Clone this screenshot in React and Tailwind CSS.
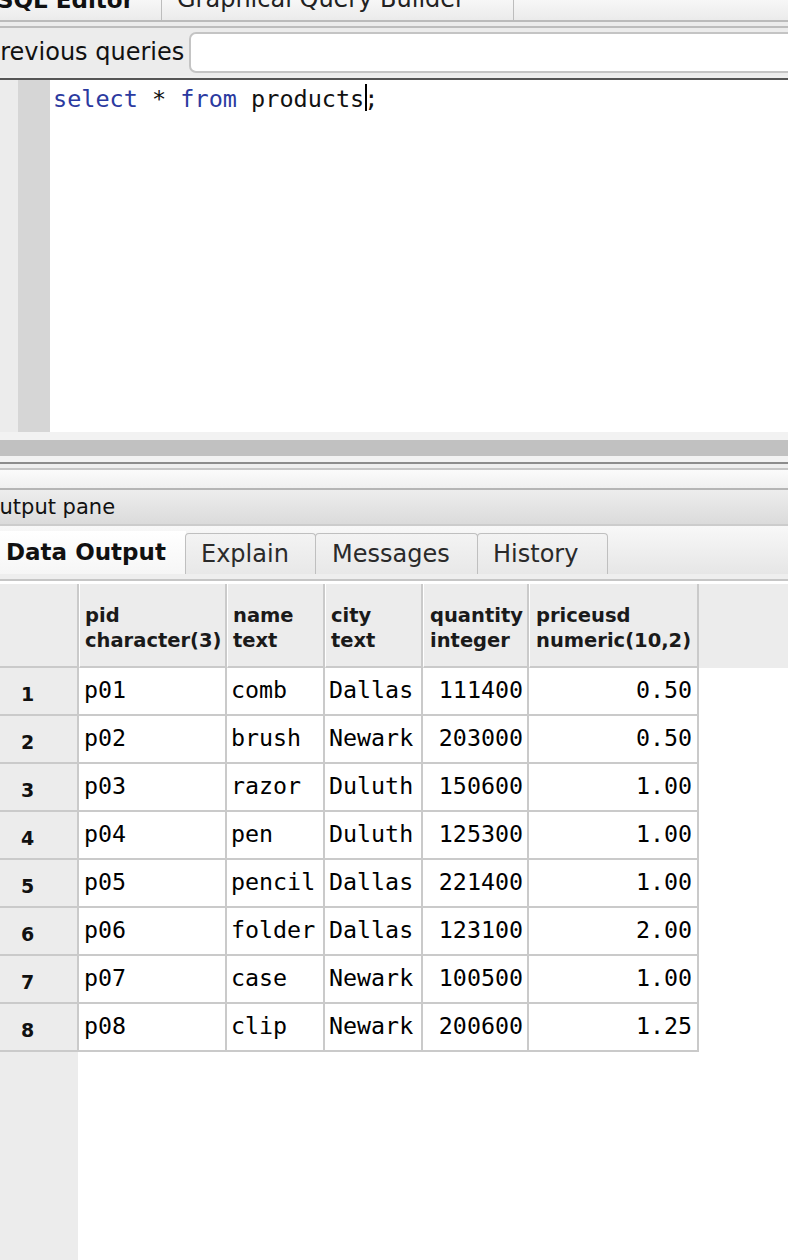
import React from 'react';

const sans = { fontFamily: '"DejaVu Sans", "Liberation Sans", sans-serif' };
const mono = { fontFamily: '"DejaVu Sans Mono", "Liberation Mono", monospace' };

const columns = [
  { name: 'pid', type: 'character(3)', width: 'w-[148px]', align: 'pl-[5px]' },
  { name: 'name', type: 'text', width: 'w-[98px]', align: 'pl-[4px]' },
  { name: 'city', type: 'text', width: 'w-[98px]', align: 'pl-[4px]' },
  { name: 'quantity', type: 'integer', width: 'w-[106px]', align: 'justify-end pr-[4px]' },
  { name: 'priceusd', type: 'numeric(10,2)', width: 'w-[170px]', align: 'justify-end pr-[5px]' },
];

const rows = [
  ['p01', 'comb', 'Dallas', '111400', '0.50'],
  ['p02', 'brush', 'Newark', '203000', '0.50'],
  ['p03', 'razor', 'Duluth', '150600', '1.00'],
  ['p04', 'pen', 'Duluth', '125300', '1.00'],
  ['p05', 'pencil', 'Dallas', '221400', '1.00'],
  ['p06', 'folder', 'Dallas', '123100', '2.00'],
  ['p07', 'case', 'Newark', '100500', '1.00'],
  ['p08', 'clip', 'Newark', '200600', '1.25'],
];

const headerPad = ['pl-[5px]', 'pl-[5px]', 'pl-[5px]', 'pl-[6px]', 'pl-[6px]'];

const OutputTab = ({ label, width, pad }) => (
  <div className={`${width} ${pad} h-[41px] flex items-center bg-gradient-to-b from-[#f3f3f3] to-[#e8e8e8] border border-b-0 border-[#bfbfbf] rounded-t-[4px] -ml-px`}>
    <span className="text-[24px] text-[#2a2a2a] leading-none">{label}</span>
  </div>
);

export default function App() {
  return (
    <div className="w-[788px] h-[1260px] overflow-hidden flex flex-col bg-white" style={sans}>
      {/* top tabs */}
      <div className="h-[20px] shrink-0 flex overflow-hidden bg-gradient-to-b from-[#f7f7f7] to-[#ebebeb]">
        <div className="w-[161px] overflow-hidden">
          <span className="block mt-[-13px] ml-[-3px] text-[23px] leading-[27px] font-bold text-[#111] whitespace-nowrap">SQL Editor</span>
        </div>
        <div className="w-[353px] border-l border-r border-[#bdbdbd] overflow-hidden">
          <span className="block mt-[-14px] pl-[15px] text-[24px] leading-[27px] text-[#222] whitespace-nowrap">Graphical Query Builder</span>
        </div>
      </div>
      <div className="h-[2px] shrink-0 bg-[#bbbbbb]" />
      <div className="h-[4px] shrink-0 bg-[#ececec]" />
      <div className="h-[2px] shrink-0 bg-[#bdbdbd]" />

      {/* previous queries */}
      <div className="h-[48px] shrink-0 flex items-start bg-[#ececec] overflow-hidden">
        <span className="ml-[-15px] mt-[10px] text-[24px] leading-[28px] text-[#111] whitespace-nowrap">previous queries</span>
        <div className="ml-[5px] mt-[4px] h-[41px] flex-1 -mr-[12px] bg-white border-2 border-[#c4c4c4] rounded-[7px]" />
      </div>
      <div className="h-[2px] shrink-0 bg-[#efefef]" />
      <div className="h-[2px] shrink-0 bg-[#555555]" />

      {/* editor */}
      <div className="h-[352px] shrink-0 flex">
        <div className="w-[18px] bg-[#ececec]" />
        <div className="w-[32px] bg-[#d6d6d6]" />
        <div className="flex-1 bg-white pl-[3px] pt-[5px]">
          <div className="text-[23.5px] leading-[28px] text-[#111] whitespace-pre" style={mono}>
            <span className="text-[#2b3aa0]">select</span> * <span className="text-[#2b3aa0]">from</span> products
            <span className="relative">;<span className="absolute left-[1px] top-[-1px] w-[2px] h-[27px] bg-black" /></span>
          </div>
        </div>
      </div>

      {/* splitter */}
      <div className="h-[8px] shrink-0 bg-[#f2f2f2]" />
      <div className="h-[16px] shrink-0 bg-[#c1c1c1]" />
      <div className="h-[6px] shrink-0 bg-[#f2f2f2]" />
      <div className="h-[2px] shrink-0 bg-[#8c8c8c]" />
      <div className="h-[4px] shrink-0 bg-[#eeeeee]" />
      <div className="h-[2px] shrink-0 bg-[#c6c6c6]" />
      <div className="h-[18px] shrink-0 bg-gradient-to-b from-[#fbfbfb] to-[#f0f0f0]" />
      <div className="h-[2px] shrink-0 bg-[#b5b5b5]" />

      {/* output pane header */}
      <div className="h-[34px] shrink-0 flex items-center bg-gradient-to-b from-[#ededed] to-[#dbdbdb] overflow-hidden">
        <span className="ml-[-17px] text-[21px] leading-none text-[#111] whitespace-nowrap">Output pane</span>
      </div>
      <div className="h-[2px] shrink-0 bg-[#cccccc]" />

      {/* output tabs */}
      <div className="h-[48px] shrink-0 flex items-end bg-gradient-to-b from-[#f8f8f8] to-[#e6e6e6]">
        <div className="w-[186px] h-[43px] flex items-center pl-[6px] bg-gradient-to-b from-white to-[#f6f6f6]">
          <span className="text-[23px] font-bold text-[#111] leading-none">Data Output</span>
        </div>
        <OutputTab label="Explain" width="w-[131px]" pad="pl-[15px]" />
        <OutputTab label="Messages" width="w-[163px]" pad="pl-[16px]" />
        <OutputTab label="History" width="w-[131px]" pad="pl-[15px]" />
      </div>
      <div className="h-[5px] shrink-0 bg-[#eeeeee]" />
      <div className="h-[2px] shrink-0 bg-[#c6c6c6]" />
      <div className="h-[3px] shrink-0 bg-white" />

      {/* grid header */}
      <div className="h-[84px] shrink-0 flex bg-[#ececec]">
        <div className="w-[79px] border-r-2 border-b-2 border-[#cacaca]" />
        {columns.map((c, i) => (
          <div key={c.name} className={`${c.width} ${headerPad[i]} pt-[5px] flex flex-col justify-center border-r-2 border-b-2 border-[#cacaca] border-l border-l-white`}>
            <span className="text-[19.5px] leading-[25px] font-bold text-[#1a1a1a] whitespace-nowrap">{c.name}</span>
            <span className="text-[19.5px] leading-[25px] font-bold text-[#1a1a1a] whitespace-nowrap">{c.type}</span>
          </div>
        ))}
        <div className="flex-1" />
      </div>

      {/* grid rows */}
      {rows.map((r, ri) => (
        <div key={r[0]} className="h-[48px] shrink-0 flex">
          <div className="w-[79px] pl-[21px] pt-[6px] flex items-center bg-[#ececec] border-r-2 border-b-2 border-[#cacaca]">
            <span className="text-[19px] font-bold text-[#111] leading-none">{ri + 1}</span>
          </div>
          {r.map((v, ci) => (
            <div key={ci} className={`${columns[ci].width} ${columns[ci].align} pb-[3px] flex items-center bg-white border-r-2 border-b-2 border-[#cacaca]`}>
              <span className="text-[23.3px] leading-none text-black whitespace-pre" style={mono}>{v}</span>
            </div>
          ))}
          <div className="flex-1 bg-white" />
        </div>
      ))}

      {/* empty area */}
      <div className="flex-1 flex">
        <div className="w-[78px] bg-[#ececec]" />
        <div className="flex-1 bg-white" />
      </div>
    </div>
  );
}
